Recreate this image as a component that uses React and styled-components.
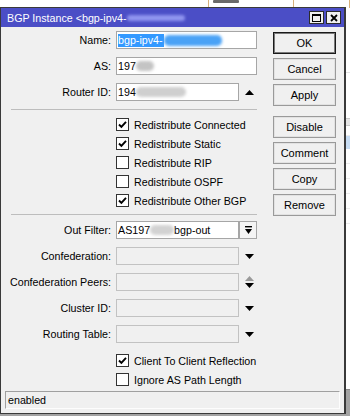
import React from 'react';
import styled, { createGlobalStyle } from 'styled-components';

const GlobalStyle = createGlobalStyle`
  html, body {
    margin: 0;
    padding: 0;
    background: #a0a0a0;
  }
  body {
    font-family: "Liberation Sans", Arial, sans-serif;
    font-size: 10.7px;
    color: #000;
  }
`;

const Desktop = styled.div`
  position: relative;
  width: 350px;
  height: 416px;
  overflow: hidden;
  background: #fff;
  display: flex;
  flex-direction: column;
`;

/* the list window that sits behind the dialog */
const BackColumns = styled.div`
  height: 8px;
  display: grid;
  grid-template-columns: 209px 85px 1fr;
  & > div {
    border-right: 1px solid #d8b07a;
  }
`;

const BackSmudge = styled.div`
  margin: 0 0 0 4px;
  width: 26px;
  height: 3px;
  background: #6a6a6a;
  border-radius: 1px;
`;

const BackList = styled.div`
  flex: 1;
  display: flex;
  flex-direction: column;
  padding-top: 64px;
`;

const BackLine = styled.div`
  height: 1px;
  background: #e4e4e4;
  margin-bottom: ${(p) => p.$after || 14}px;
`;

const BackHeader = styled.div`
  height: 6px;
  background: #e6e6e6;
  border-top: 1px solid #c8c8c8;
  border-bottom: 1px solid #c8c8c8;
`;

const BackRow = styled.div`
  height: ${(p) => p.$h || 14}px;
  background: ${(p) => (p.$selected ? '#c7dcf3' : '#fff')};
  border-bottom: 1px solid ${(p) => (p.$selected ? '#c7dcf3' : '#ececec')};
`;

const BackFloor = styled.div`
  height: 26px;
  background: #a3a3a3;
  border-top: 1px solid #888;
`;

/* dialog */
const Dialog = styled.div`
  position: absolute;
  left: 0;
  top: 7px;
  width: 346px;
  height: 407px;
  box-sizing: border-box;
  border: 1px solid #3a3a3a;
  border-right-width: 2px;
  background: #f0f0f0;
  display: flex;
  flex-direction: column;
`;

const TitleBar = styled.div`
  height: 19px;
  background: #4b4ec6;
  display: flex;
  align-items: center;
  padding-left: 6px;
  padding-right: 3px;
  color: #fff;
  font-size: 10.7px;
`;

const TitleText = styled.div`
  flex: 1;
  display: flex;
  align-items: center;
  white-space: nowrap;
`;

const Smear = styled.span`
  display: inline-block;
  width: ${(p) => p.$w}px;
  height: ${(p) => p.$h || 8}px;
  background: ${(p) => p.$color};
  border-radius: 5px;
  filter: blur(1.4px);
  vertical-align: middle;
  margin-left: ${(p) => p.$ml || 0}px;
`;

const TitleButtons = styled.div`
  display: flex;
  gap: 2px;
`;

const TitleButton = styled.div`
  width: 15px;
  height: 13px;
  box-sizing: border-box;
  background: #f0f0f0;
  border: 1px solid #2c2c2c;
  display: flex;
  align-items: center;
  justify-content: center;
`;

const Body = styled.div`
  display: flex;
  padding-top: 4px;
`;

const Form = styled.div`
  width: 262px;
  display: flex;
  flex-direction: column;
`;

const FieldRow = styled.div`
  display: grid;
  grid-template-columns: 115px 123px 18px;
  height: 18px;
  align-items: center;
  margin-bottom: 8px;
`;

const Label = styled.div`
  text-align: right;
  padding-right: 5px;
  white-space: nowrap;
`;

const Input = styled.div`
  grid-column: ${(p) => (p.$wide ? '2 / 4' : '2 / 3')};
  height: 18px;
  box-sizing: border-box;
  border: 1px solid ${(p) => (p.$disabled ? '#c2c2c2' : '#a6a6a6')};
  background: ${(p) => (p.$disabled ? '#f0f0f0' : '#fff')};
  display: flex;
  align-items: center;
  padding-left: 1px;
  white-space: nowrap;
  overflow: hidden;
`;

const Selected = styled.span`
  background: #3399ff;
  color: #fff;
  line-height: 13px;
  padding-right: 1px;
`;

const IconSlot = styled.div`
  height: 18px;
  display: flex;
  align-items: center;
  padding-left: 6px;
`;

const DropButton = styled.div`
  height: 18px;
  box-sizing: border-box;
  border: 1px solid #a6a6a6;
  background: #f4f4f4;
  display: flex;
  align-items: center;
  justify-content: center;
`;

const Separator = styled.div`
  margin-left: 10px;
  width: 246px;
  height: 1px;
  background: #bdbdbd;
  margin-top: ${(p) => p.$mt || 0}px;
  margin-bottom: ${(p) => p.$mb || 0}px;
`;

const CheckRow = styled.label`
  height: 19px;
  display: flex;
  align-items: center;
  padding-left: 115px;
  gap: 5px;
  white-space: nowrap;
`;

const Box = styled.span`
  width: 13px;
  height: 13px;
  box-sizing: border-box;
  border: 1px solid #333;
  background: #fff;
  display: flex;
  align-items: center;
  justify-content: center;
`;

const ButtonColumn = styled.div`
  margin-left: 10px;
  padding-top: 1px;
  width: 63px;
  display: flex;
  flex-direction: column;
  gap: 4px;
`;

const Button = styled.div`
  height: 22px;
  box-sizing: border-box;
  border: 1px solid ${(p) => (p.$default ? '#1a1a1a' : '#9a9a9a')};
  box-shadow: inset 0 0 0 1px ${(p) => (p.$default ? '#7a7a7a' : '#e2e2e2')};
  background: #f0f0f0;
  display: flex;
  align-items: center;
  justify-content: center;
  font-size: 11px;
  margin-top: ${(p) => p.$mt || 0}px;
`;

const StatusBar = styled.div`
  margin: auto 4px 4px 4px;
  height: 18px;
  box-sizing: border-box;
  border: 1px solid;
  border-color: #a0a0a0 #fdfdfd #fdfdfd #a0a0a0;
  display: flex;
  align-items: center;
  padding-left: 2px;
`;

const DownArrow = ({ color = '#000' }) => (
  <svg width="9" height="5" viewBox="0 0 9 5">
    <path d="M0 0h9L4.5 5z" fill={color} />
  </svg>
);

const UpArrow = ({ color = '#000' }) => (
  <svg width="9" height="5" viewBox="0 0 9 5">
    <path d="M0 5h9L4.5 0z" fill={color} />
  </svg>
);

const UpDown = () => (
  <svg width="9" height="12" viewBox="0 0 9 12">
    <path d="M0 5h9L4.5 0z" fill="#9a9a9a" />
    <path d="M0 7h9L4.5 12z" fill="#000" />
  </svg>
);

const DropIcon = () => (
  <svg width="7" height="9" viewBox="0 0 7 9">
    <rect x="0" y="0" width="7" height="1.4" fill="#000" />
    <path d="M0 3h7L3.5 8z" fill="#000" />
  </svg>
);

const Check = () => (
  <svg width="9" height="9" viewBox="0 0 9 9">
    <path d="M1 4.5l2.4 2.4L8 1.8" stroke="#000" strokeWidth="1.9" fill="none" />
  </svg>
);

function CheckBox({ checked, children }) {
  return (
    <CheckRow>
      <Box>{checked && <Check />}</Box>
      {children}
    </CheckRow>
  );
}

function Field({ label, children, icon }) {
  return (
    <FieldRow>
      <Label>{label}</Label>
      {children}
      {icon}
    </FieldRow>
  );
}

export default function App() {
  return (
    <>
      <GlobalStyle />
      <Desktop>
        <BackColumns>
          <div />
          <div>
            <BackSmudge />
          </div>
          <div />
        </BackColumns>
        <BackList>
          <BackLine $after={45} />
          <BackHeader />
          <BackRow $h={9} />
          <BackRow $selected $h={12} />
          <BackRow />
          <BackRow />
          <BackRow />
          <BackRow />
          <BackRow />
        </BackList>
        <BackFloor />

        <Dialog>
          <TitleBar>
            <TitleText>
              BGP Instance &lt;bgp-ipv4-
              <Smear $w={58} $h={6} $color="#9095f0" />
            </TitleText>
            <TitleButtons>
              <TitleButton>
                <svg width="9" height="8" viewBox="0 0 9 8">
                  <rect x="0.5" y="0.5" width="8" height="7" fill="none" stroke="#000" />
                  <rect x="0" y="0" width="9" height="2" fill="#000" />
                </svg>
              </TitleButton>
              <TitleButton>
                <svg width="8" height="8" viewBox="0 0 8 8">
                  <path d="M1 1l6 6M7 1L1 7" stroke="#000" strokeWidth="1.8" />
                </svg>
              </TitleButton>
            </TitleButtons>
          </TitleBar>

          <Body>
            <Form>
              <Field label="Name:">
                <Input $wide>
                  <Selected>bgp-ipv4-</Selected>
                  <Smear $w={58} $h={11} $color="#4aa2f6" />
                </Input>
              </Field>
              <Field label="AS:">
                <Input $wide>
                  197
                  <Smear $w={18} $h={10} $color="#c4c4c4" />
                </Input>
              </Field>
              <Field
                label="Router ID:"
                icon={
                  <IconSlot>
                    <UpArrow />
                  </IconSlot>
                }
              >
                <Input>
                  194
                  <Smear $w={50} $h={10} $color="#cfcfcf" />
                </Input>
              </Field>

              <Separator $mb={5} />

              <CheckBox checked>Redistribute Connected</CheckBox>
              <CheckBox checked>Redistribute Static</CheckBox>
              <CheckBox>Redistribute RIP</CheckBox>
              <CheckBox>Redistribute OSPF</CheckBox>
              <CheckBox checked>Redistribute Other BGP</CheckBox>

              <Separator $mt={4} $mb={6} />

              <Field
                label="Out Filter:"
                icon={
                  <DropButton>
                    <DropIcon />
                  </DropButton>
                }
              >
                <Input>
                  AS197
                  <Smear $w={24} $h={10} $color="#d2d2d2" />
                  bgp-out
                </Input>
              </Field>
              <Field
                label="Confederation:"
                icon={
                  <IconSlot>
                    <DownArrow />
                  </IconSlot>
                }
              >
                <Input $disabled />
              </Field>
              <Field
                label="Confederation Peers:"
                icon={
                  <IconSlot>
                    <UpDown />
                  </IconSlot>
                }
              >
                <Input $disabled />
              </Field>
              <Field
                label="Cluster ID:"
                icon={
                  <IconSlot>
                    <DownArrow />
                  </IconSlot>
                }
              >
                <Input $disabled />
              </Field>
              <Field
                label="Routing Table:"
                icon={
                  <IconSlot>
                    <DownArrow />
                  </IconSlot>
                }
              >
                <Input $disabled />
              </Field>

              <CheckBox checked>Client To Client Reflection</CheckBox>
              <CheckBox>Ignore AS Path Length</CheckBox>
            </Form>

            <ButtonColumn>
              <Button $default>OK</Button>
              <Button>Cancel</Button>
              <Button>Apply</Button>
              <Button $mt={6}>Disable</Button>
              <Button>Comment</Button>
              <Button>Copy</Button>
              <Button>Remove</Button>
            </ButtonColumn>
          </Body>

          <StatusBar>enabled</StatusBar>
        </Dialog>
      </Desktop>
    </>
  );
}
